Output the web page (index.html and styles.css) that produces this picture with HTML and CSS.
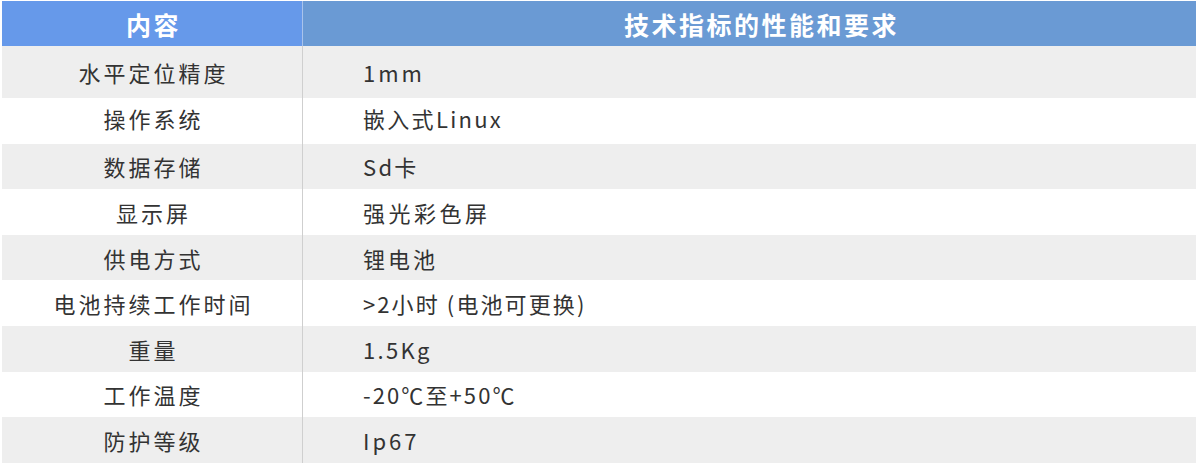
FILE: index.html
```html
<!DOCTYPE html>
<html lang="zh-CN">
<head>
<meta charset="utf-8">
<title>技术指标</title>
<link rel="stylesheet" href="styles.css">
</head>
<body>
<div class="spec">
  <div class="row head">
    <div class="c1">内容</div>
    <div class="c2">技术指标的性能和要求</div>
  </div>
  <div class="row gray first">
    <div class="c1">水平定位精度</div>
    <div class="c2">1mm</div>
  </div>
  <div class="row second">
    <div class="c1">操作系统</div>
    <div class="c2 latin">嵌入式Linux</div>
  </div>
  <div class="row gray">
    <div class="c1">数据存储</div>
    <div class="c2 latin">Sd卡</div>
  </div>
  <div class="row">
    <div class="c1">显示屏</div>
    <div class="c2 wide">强光彩色屏</div>
  </div>
  <div class="row gray">
    <div class="c1">供电方式</div>
    <div class="c2">锂电池</div>
  </div>
  <div class="row">
    <div class="c1">电池持续工作时间</div>
    <div class="c2 tight">&gt;2小时 (电池可更换)</div>
  </div>
  <div class="row gray">
    <div class="c1">重量</div>
    <div class="c2 latin">1.5Kg</div>
  </div>
  <div class="row">
    <div class="c1">工作温度</div>
    <div class="c2 tight">-20℃至+50℃</div>
  </div>
  <div class="row gray">
    <div class="c1">防护等级</div>
    <div class="c2">Ip67</div>
  </div>
</div>
</body>
</html>
```

FILE: styles.css
```css
html, body {
  margin: 0;
  padding: 0;
  background: #ffffff;
}

.spec {
  width: 1194px;
  margin: 1px 0 0 2px;
  font-family: "Noto Sans CJK SC", "Noto Sans", sans-serif;
  color: #333333;
}

.row {
  display: flex;
  height: 45.6px;
  background: #ffffff;
}

.row.gray {
  background: #eeeeee;
}

.row.first {
  height: 52px;
}

.row.second .c1,
.row.second .c2 {
  padding-bottom: 5px;
}

.c1 {
  width: 301px;
  flex: none;
  box-sizing: border-box;
  display: flex;
  align-items: center;
  justify-content: center;
  padding-left: 3px;
  font-size: 22px;
  letter-spacing: 3px;
  border-right: 1px solid #cfcfcf;
}

.c2 {
  flex: 1;
  box-sizing: border-box;
  display: flex;
  align-items: center;
  padding-left: 60px;
  font-size: 22px;
  letter-spacing: 3px;
}

.c2.latin {
  letter-spacing: 2.3px;
}

.c2.wide {
  letter-spacing: 3.5px;
}

.c2.tight {
  letter-spacing: 2.1px;
}

.row.head {
  height: 45px;
  background: #6a9ad4;
  color: #ffffff;
}

.row.head .c1 {
  background: #6699ea;
  border-right: 1px solid #a9c3ec;
  font-size: 25px;
  font-weight: 700;
  letter-spacing: 2.5px;
}

.row.head .c2 {
  justify-content: center;
  padding-left: 24px;
  font-size: 25px;
  font-weight: 700;
  letter-spacing: 2.5px;
}
```
